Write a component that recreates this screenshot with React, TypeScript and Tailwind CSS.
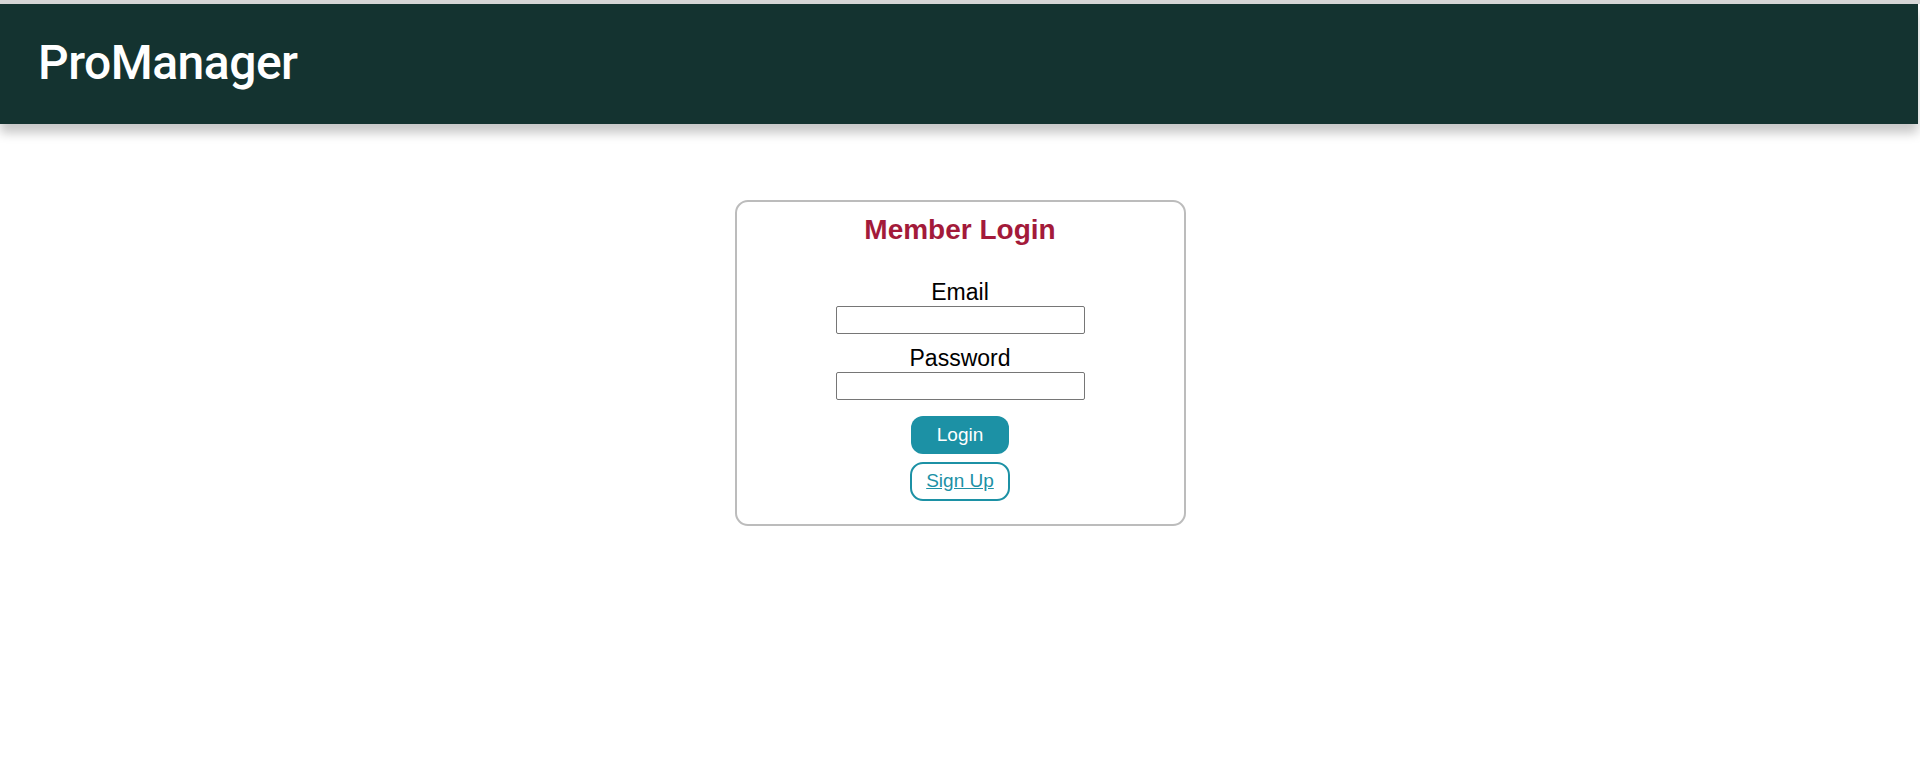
export default function App() {
  return (
    <div className="min-h-[777px] bg-white border-t-[4px] border-[#d6d6d6] font-['Liberation_Sans',Arial,sans-serif]">
      <header className="mr-[2px] h-[120px] bg-[#143330] flex items-center px-[38px] shadow-[0_9px_10px_rgba(0,0,0,0.22)]">
        <h1 className="text-white text-[48px] font-medium tracking-[-0.5px] font-['Roboto',sans-serif] pb-[2px]">
          ProManager
        </h1>
      </header>

      <main className="flex justify-center pt-[76px]">
        <div className="w-[451px] border-2 border-[#bcbcbc] rounded-[13px] flex flex-col items-center pt-[12px] pb-[23px]">
          <h2 className="text-[28px] leading-[32px] font-bold text-[#a31a3a]">Member Login</h2>

          <form className="flex flex-col items-center mt-[33px]" onSubmit={(e) => e.preventDefault()}>
            <label htmlFor="email" className="text-[23px] leading-[26px] text-black">
              Email
            </label>
            <input
              id="email"
              type="email"
              className="mt-[1px] w-[249px] h-[28px] border border-[#767676] rounded-[2px] bg-white"
            />
            <label htmlFor="password" className="mt-[11px] text-[23px] leading-[26px] text-black">
              Password
            </label>
            <input
              id="password"
              type="password"
              className="mt-[1px] w-[249px] h-[28px] border border-[#767676] rounded-[2px] bg-white"
            />
            <button
              type="submit"
              className="mt-[16px] w-[98px] h-[38px] rounded-[12px] bg-[#1c91a5] text-white text-[19px]"
            >
              Login
            </button>
            <a
              href="#"
              className="mt-[8px] w-[100px] h-[39px] rounded-[13px] border-2 border-[#1c91a5] text-[#1c91a5] text-[19px] underline flex items-center justify-center"
            >
              Sign Up
            </a>
          </form>
        </div>
      </main>
    </div>
  );
}
